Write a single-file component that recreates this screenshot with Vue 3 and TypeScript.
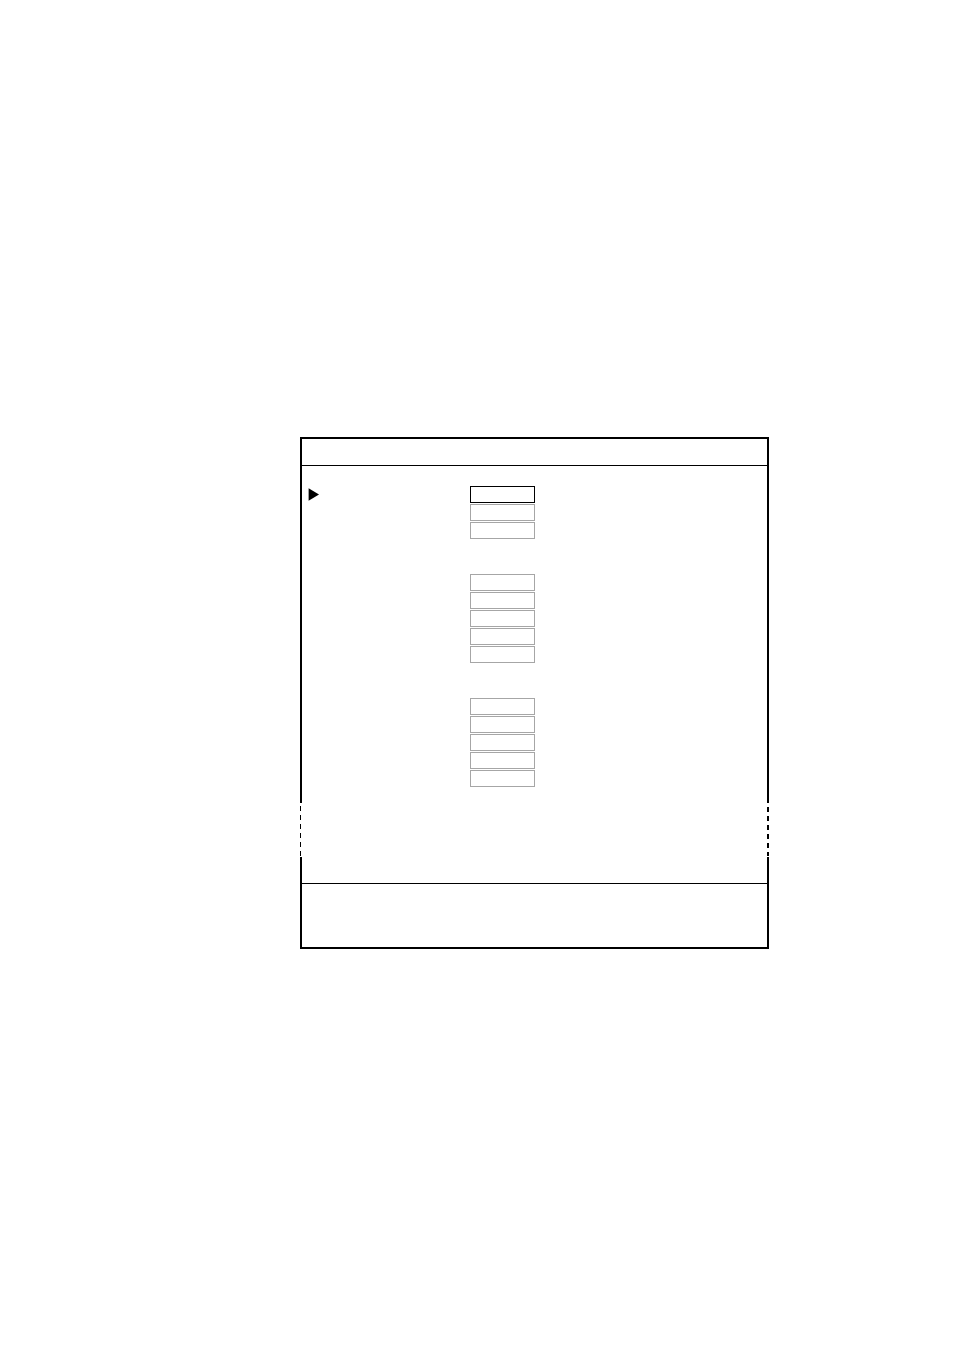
<script setup lang="ts">
import { ref } from 'vue'

interface Field {
  id: string
  value: string
}

const makeGroup = (group: number, count: number): Field[] =>
  Array.from({ length: count }, (_, i) => ({ id: `g${group}-f${i + 1}`, value: '' }))

const groups = ref<Field[][]>([makeGroup(1, 3), makeGroup(2, 5), makeGroup(3, 5)])
const activeId = ref('g1-f1')
</script>

<template>
  <main class="page">
    <form class="panel" @submit.prevent>
      <header class="title-bar"></header>
      <section class="body">
        <div v-for="(group, g) in groups" :key="g" class="group">
          <div v-for="(field, f) in group" :key="field.id" class="row">
            <span class="marker">
              <svg v-if="field.id === activeId" width="12" height="13" viewBox="0 0 12 13" aria-hidden="true">
                <path d="M0.6 0.3 L11 6.5 L0.6 12.7 Z" fill="#000" />
              </svg>
            </span>
            <input
              :id="field.id"
              v-model="field.value"
              class="field"
              :class="{ active: field.id === activeId }"
              type="text"
              :aria-label="`Group ${g + 1}, value ${f + 1}`"
              @focus="activeId = field.id"
            />
          </div>
        </div>
      </section>
      <div class="break"></div>
      <div class="tail"></div>
      <footer class="status"></footer>
    </form>
  </main>
</template>

<style>
body {
  margin: 0;
  background: #fff;
}
</style>

<style scoped>
.page {
  padding: 437px 185px 402px 300px;
  font-family: "Liberation Sans", Arial, sans-serif;
}
.panel {
  display: flex;
  flex-direction: column;
}
.title-bar,
.body,
.tail,
.status {
  box-sizing: border-box;
  border: 0 solid #000;
  border-left-width: 2px;
  border-right-width: 2px;
}
.title-bar {
  min-height: 28px;
  border-top-width: 2px;
}
.body {
  display: flex;
  flex-direction: column;
  gap: 35px;
  min-height: 338px;
  padding: 21px 6px 16px;
  background: linear-gradient(#000, #000) top / 100% 1px no-repeat;
}
.group {
  display: flex;
  flex-direction: column;
  gap: 1px;
}
.row {
  display: grid;
  grid-template-columns: 162px 65px;
  align-items: center;
  height: 17px;
}
.marker {
  display: flex;
  align-items: center;
}
.field {
  box-sizing: border-box;
  width: 100%;
  height: 17px;
  margin: 0;
  padding: 0 4px;
  border: 1px solid #a6a6a6;
  border-radius: 0;
  background: #fff;
  font: 12px "Liberation Sans", Arial, sans-serif;
  outline: none;
}
.field.active {
  border-color: #000;
}
.break {
  height: 54px;
  background:
    linear-gradient(#fff, #fff) bottom / 100% 1px no-repeat,
    repeating-linear-gradient(transparent 0 3px, #000 3px 8px, transparent 8px 9px) left / 1px 100% no-repeat,
    repeating-linear-gradient(transparent 0 4px, #000 4px 9px) right / 2px 100% no-repeat;
}
.tail {
  height: 26px;
}
.status {
  min-height: 66px;
  border-bottom-width: 2px;
  background: linear-gradient(#000, #000) top / 100% 1px no-repeat;
}
</style>
